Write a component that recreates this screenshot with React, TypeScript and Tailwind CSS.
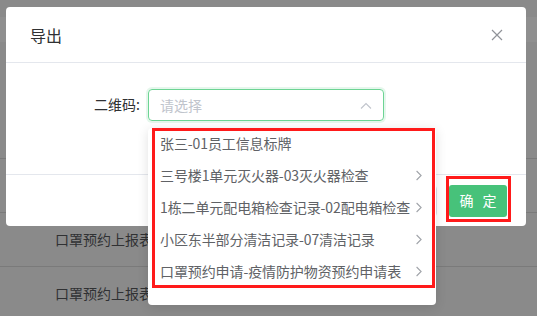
const FONT = "font-['Microsoft_YaHei','Noto_Sans_CJK_SC','Noto_Sans',sans-serif]";

const OPTIONS = [
  { label: "张三-01员工信息标牌", leaf: true },
  { label: "三号楼1单元灭火器-03灭火器检查", leaf: false },
  { label: "1栋二单元配电箱检查记录-02配电箱检查", leaf: false },
  { label: "小区东半部分清洁记录-07清洁记录", leaf: false },
  { label: "口罩预约申请-疫情防护物资预约申请表", leaf: false },
];

function ChevronRight() {
  return (
    <svg width="6" height="11" viewBox="0 0 6 11" fill="none" className="shrink-0">
      <path d="M0.6 1l4.5 4.5L0.6 10" stroke="#a0a3a9" strokeWidth="1.1" />
    </svg>
  );
}

function ChevronUp() {
  return (
    <svg width="12" height="7" viewBox="0 0 12 7" fill="none">
      <path d="M1 6.5L6 1.5l5 5" stroke="#c0c4cc" strokeWidth="1.1" />
    </svg>
  );
}

function CloseIcon() {
  return (
    <svg width="12" height="12" viewBox="0 0 12 12" fill="none">
      <path d="M1 1l10 10M11 1L1 11" stroke="#909399" strokeWidth="1.2" />
    </svg>
  );
}

function BackgroundPage() {
  return (
    <div className="flex flex-col pt-[17px]">
      <div className="h-[25px] bg-[#8f8f8f]" />
      <div className="h-[116px]" />
      <div className="h-[54px] border-t border-[#7a7a7a]" />
      {[0, 1].map((i) => (
        <div
          key={i}
          className="flex h-[54px] items-center border-t border-[#7a7a7a] pl-[55px] text-[14px] text-[#303133]"
        >
          口罩预约上报表
        </div>
      ))}
    </div>
  );
}

export default function App() {
  return (
    <div className={`relative h-[316px] w-[537px] overflow-hidden bg-[#8a8a8a] ${FONT}`}>
      <BackgroundPage />

      {/* dialog */}
      <div className="absolute left-[6px] top-[7px] flex h-[219px] w-[520px] flex-col rounded-[4px] bg-white">
        <div className="flex h-[56px] items-center justify-between border-b border-[#e4e7ed] pl-[24px] pr-[23px]">
          <span className="text-[16px] text-[#303133]">导出</span>
          <CloseIcon />
        </div>
        <div className="flex h-[111px] items-start pt-[26px]">
          <label className="w-[134px] pt-[5px] text-right text-[14px] text-[#303133]">二维码:</label>
          <div className="ml-[8px] flex h-[32px] w-[236px] items-center justify-between rounded-[4px] border border-[#6dd494] px-[11px] shadow-[0_0_0_2px_rgba(110,212,148,0.18)]">
            <span className="text-[14px] text-[#c0c4cc]">请选择</span>
            <ChevronUp />
          </div>
        </div>
        <div className="flex flex-1 items-center justify-end gap-[12px] border-t border-[#e4e7ed] pr-[19px]">
          {/* cancel button sits under the dropdown; only its edge shows */}
          <div className="h-[32px] w-[60px] rounded-[4px] border border-[#dcdfe6] bg-white" />
          <button className="h-[32px] w-[58px] rounded-[3px] bg-[#47c27a] pl-[3px] text-[14px] tracking-[3px] text-white">
            确 定
          </button>
        </div>
      </div>

      {/* cascader dropdown */}
      <div className="absolute left-[148px] top-[128px] flex h-[177px] w-[288px] flex-col rounded-[4px] bg-white shadow-[0_2px_12px_rgba(0,0,0,0.12)]">
        {OPTIONS.map((o) => (
          <div
            key={o.label}
            className="flex h-[32px] items-center justify-between gap-[1px] pl-[12px] pr-[14px] text-[14px] text-[#606266] first:mt-[-1px]"
          >
            <span className="whitespace-nowrap tracking-[-0.1px]">{o.label}</span>
            {!o.leaf && <ChevronRight />}
          </div>
        ))}
      </div>

      {/* annotation boxes */}
      <div className="absolute left-[152px] top-[128px] h-[160px] w-[283px] border-[3px] border-[#ff1a1a]" />
      <div className="absolute left-[446px] top-[176px] h-[46px] w-[65px] border-[3px] border-[#ff1a1a]" />
    </div>
  );
}
